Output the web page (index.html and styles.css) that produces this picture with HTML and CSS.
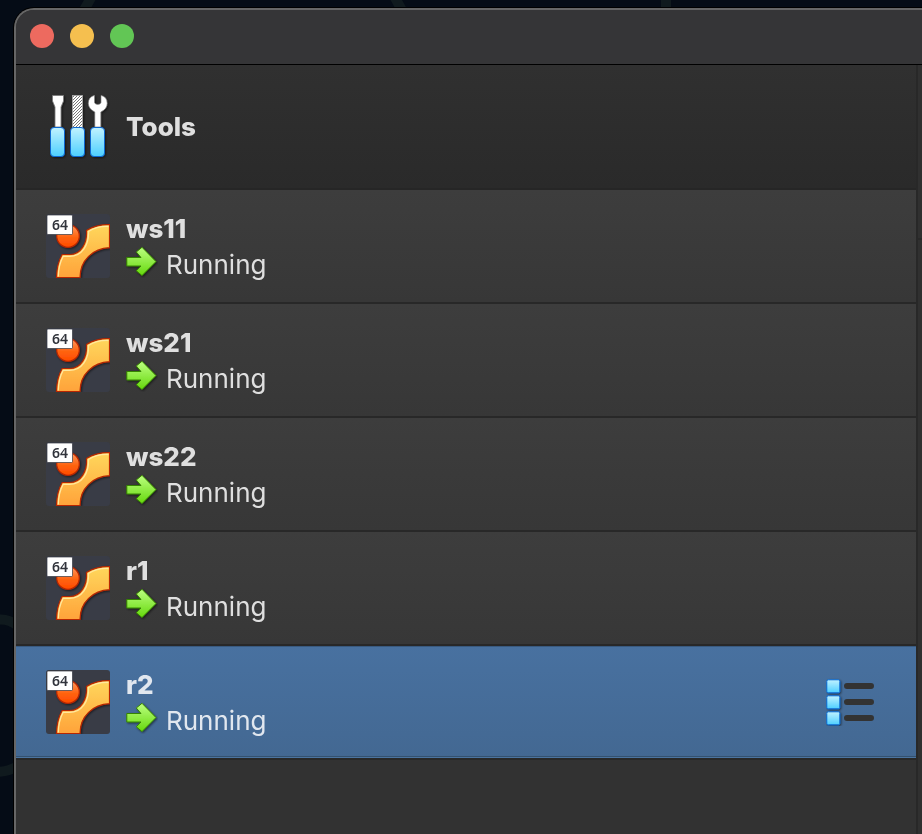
FILE: index.html
```html
<!DOCTYPE html>
<html lang="en">
<head>
<meta charset="utf-8">
<title>Virtual machines</title>
<link rel="stylesheet" href="styles.css">
</head>
<body>
<svg width="0" height="0" class="defs" aria-hidden="true">
  <defs>
    <linearGradient id="cyan" x1="0" y1="0" x2="0" y2="1"><stop offset="0" stop-color="#c0f2ff"/><stop offset="1" stop-color="#4dcfff"/></linearGradient>
    <linearGradient id="green" x1="0" y1="0" x2="0" y2="1"><stop offset="0" stop-color="#bcff80"/><stop offset="1" stop-color="#65d80c"/></linearGradient>
    <linearGradient id="gold" x1="0" y1="0" x2="0" y2="1"><stop offset="0" stop-color="#ffd75c"/><stop offset="1" stop-color="#ffa33a"/></linearGradient>
    <linearGradient id="ball" x1="0" y1="0" x2="0" y2="1"><stop offset="0" stop-color="#ff9a62"/><stop offset="0.55" stop-color="#ff6410"/><stop offset="1" stop-color="#ff4a00"/></linearGradient>
    <pattern id="hatch" width="3" height="3" patternUnits="userSpaceOnUse"><rect width="3" height="3" fill="#fff"/><path d="M-1 1L1-1M0 3L3 0M2 4L4 2" stroke="#555" stroke-width=".8"/></pattern>
    <filter id="soft" x="-20%" y="-20%" width="150%" height="150%"><feDropShadow dx="1" dy="1" stdDeviation="1" flood-color="#000" flood-opacity=".55"/></filter>
    <clipPath id="tile"><rect width="64" height="64" rx="3"/></clipPath>
    <symbol id="os" viewBox="0 0 64 64">
      <g clip-path="url(#tile)">
        <rect width="64" height="64" fill="#393c46"/>
        <g filter="url(#soft)" stroke="#b82800" stroke-width="1.2">
          <circle cx="22" cy="22" r="11.3" fill="url(#ball)"/>
          <path d="M63.5 10.7Q50 10.5 40.5 16.5C41.500 29 35 41 23 40.500H16.200Q10.700 50 10.500 63.500H34C34 46 47 34.500 63.500 33.700Z" fill="url(#gold)"/>
          <path d="M62.500 12.500Q51 12 42.500 17.500C43 31 36 42.500 23 42.300H17.200Q12.500 51 12.300 62.500" fill="none" stroke="#ffe9a0" stroke-width="1.300"/>
        </g>
      </g>
      <rect x="1" y="1" width="25.500" height="19.500" rx="1" fill="#fff" stroke="#333740" stroke-width=".7"/>
      <text x="14" y="16" class="bits">64</text>
    </symbol>
    <symbol id="run" viewBox="0 0 32 32">
      <path d="M.8 11.500H15L10.300 6L16 1.300L30 15.600L16 29.600L10.300 24.800L15 20H.8Z" fill="url(#green)" stroke="#368400" filter="url(#soft)"/>
    </symbol>
  </defs>
</svg>
<svg class="wallpaper" viewBox="0 0 922 834" preserveAspectRatio="none" aria-hidden="true">
  <path d="M92-4L84 10M394-4L403 12M666-4V12M-4 620Q8 618 18 626M-4 772Q8 772 18 766" fill="none" stroke="#101a1e" stroke-width="10"/>
</svg>
<main class="window">
  <header class="titlebar">
    <button class="light close" aria-label="Close"></button>
    <button class="light minimize" aria-label="Minimize"></button>
    <button class="light maximize" aria-label="Maximize"></button>
  </header>
  <div class="body">
    <nav class="list">
      <button class="row tools">
        <svg class="icon" viewBox="0 1 64 64" aria-hidden="true">
          <g filter="url(#soft)">
            <path d="M6.500 1.500H17.500V7L15 13V33H9V13L6.500 7Z" fill="#fff" stroke="#777" stroke-width=".8"/>
            <rect x="26.500" y="1.500" width="10" height="32" fill="url(#hatch)" stroke="#aaa" stroke-width=".8"/>
            <path d="M48.500 1.300Q42.300 3 42.300 9.300Q42.500 15 48.800 18V33H54.800V18Q61.200 15 61.200 9.300Q61.200 3 55 1.300V8.500Q54.500 10.500 51.800 10.500Q49 10.500 48.500 8.500Z" fill="#fff" stroke="#777" stroke-width=".6"/>
            <g fill="url(#cyan)" stroke="#0b68d2">
              <rect x="4.500" y="33.500" width="14" height="29" rx="3.500"/><rect x="24.500" y="33.500" width="14" height="29" rx="3.500"/><rect x="44.500" y="33.500" width="14" height="29" rx="3.500"/>
            </g>
          </g>
        </svg>
        <span class="name">Tools</span>
      </button>
      <button class="row"><svg class="icon" aria-hidden="true"><use href="#os"/></svg><span class="info"><span class="name">ws11</span><span class="state"><svg class="arrow" aria-hidden="true"><use href="#run"/></svg><span>Running</span></span></span></button>
      <button class="row"><svg class="icon" aria-hidden="true"><use href="#os"/></svg><span class="info"><span class="name">ws21</span><span class="state"><svg class="arrow" aria-hidden="true"><use href="#run"/></svg><span>Running</span></span></span></button>
      <button class="row"><svg class="icon" aria-hidden="true"><use href="#os"/></svg><span class="info"><span class="name">ws22</span><span class="state"><svg class="arrow" aria-hidden="true"><use href="#run"/></svg><span>Running</span></span></span></button>
      <button class="row"><svg class="icon" aria-hidden="true"><use href="#os"/></svg><span class="info"><span class="name">r1</span><span class="state"><svg class="arrow" aria-hidden="true"><use href="#run"/></svg><span>Running</span></span></span></button>
      <div class="selected">
        <button class="row"><svg class="icon" aria-hidden="true"><use href="#os"/></svg><span class="info"><span class="name">r2</span><span class="state"><svg class="arrow" aria-hidden="true"><use href="#run"/></svg><span>Running</span></span></span></button>
        <button class="menu" aria-label="Machine menu">
          <svg viewBox="0 0 48 48" aria-hidden="true">
            <g fill="url(#cyan)" stroke="#0b6cd6" filter="url(#soft)"><rect x=".8" y="1.800" width="13" height="13" rx="1.500"/><rect x=".8" y="17.800" width="13" height="13" rx="1.500"/><rect x=".8" y="33.800" width="13" height="13" rx="1.500"/></g>
            <path d="M21 8H45M21 24H45M21 40H45" stroke="#333" stroke-width="6" stroke-linecap="round"/>
          </svg>
        </button>
      </div>
    </nav>
    <section class="detail" aria-label="Details"><div class="detail-bar"></div></section>
  </div>
</main>
</body>
</html>
```
FILE: styles.css
```css
* { box-sizing: border-box; }

body {
  margin: 0;
  min-height: 100vh;
  padding: 8px 0 0 14px;
  display: flex;
  overflow: hidden;
  background: #050c16;
  font-family: Inter, "Liberation Sans", sans-serif;
  color: #dfdfdf;
}

button {
  margin: 0;
  padding: 0;
  border: 0;
  background: none;
  font: inherit;
  color: inherit;
}

.defs { position: absolute; }

.wallpaper {
  position: fixed;
  inset: 0;
  width: 100%;
  height: 100%;
  z-index: -1;
}

.window {
  flex: 1;
  display: flex;
  flex-direction: column;
  overflow: hidden;
  border: 2px solid #666;
  border-right: 0;
  border-bottom: 0;
  border-top-left-radius: 20px;
  background: #323232;
  box-shadow: 0 0 0 1px #000;
}

.titlebar {
  display: flex;
  align-items: center;
  gap: 16px;
  height: 55px;
  padding: 0 14px 2px;
  background: #353537;
  border-bottom: 1px solid #000;
}

.light {
  width: 24px;
  height: 24px;
  border-radius: 50%;
}

.close { background: #ed6a5f; }
.minimize { background: #f5bf4f; }
.maximize { background: #62c655; }

.body {
  flex: 1;
  display: flex;
}

.list {
  flex: 1;
  display: flex;
  flex-direction: column;
}

.row {
  display: flex;
  align-items: center;
  gap: 16px;
  height: 114px;
  padding: 0 30px;
  text-align: left;
  background: linear-gradient(#3d3d3d, #373737);
  border-bottom: 2px solid #282828;
}

.tools {
  height: 125px;
  background: linear-gradient(#303030, #2a2a2a);
  border-bottom-color: #262626;
}

.icon {
  width: 64px;
  height: 64px;
  flex: none;
}

.bits {
  font: 600 14px "Noto Sans", sans-serif;
  fill: #30333b;
  text-anchor: middle;
}

.info {
  display: flex;
  flex-direction: column;
  gap: 4px;
  padding-top: 2px;
}

.name {
  font-size: 26px;
  line-height: 32px;
  font-weight: 800;
}

.state {
  display: flex;
  gap: 8px;
  font-size: 26px;
  line-height: 32px;
}

.arrow {
  width: 32px;
  height: 32px;
  margin-top: -3px;
}

.selected {
  display: flex;
  align-items: center;
  height: 114px;
  padding-right: 42px;
  background: linear-gradient(#4871a0, #436892);
  border-bottom: 2px solid #282828;
  box-shadow: inset 0 1px #395a80, inset 0 -1px #4a739f, inset 0 -2px #34516f;
  color: #e1e7ef;
}

.selected .row {
  flex: 1;
  height: 100%;
  background: none;
  border: 0;
}

.menu,
.menu svg {
  display: block;
  width: 48px;
  height: 48px;
}

.detail {
  width: 6px;
  border-left: 2px solid #282828;
  background: #303030;
}

.detail-bar {
  height: 175px;
  border-bottom: 2px solid #292929;
}
```
